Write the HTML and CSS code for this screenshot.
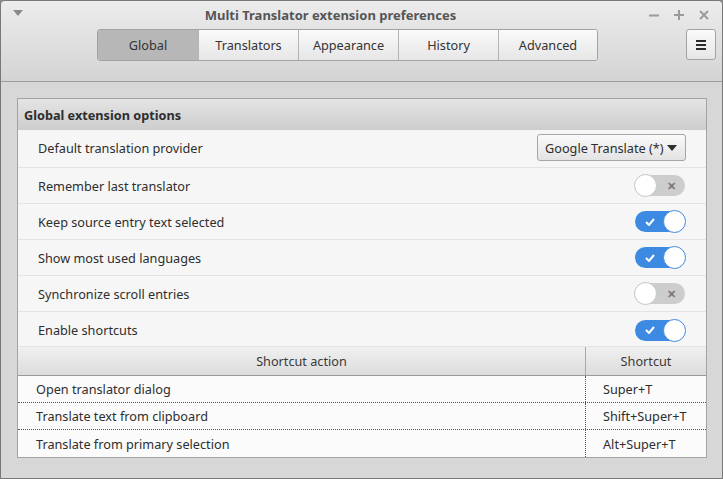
FILE: index.html
```html
<!DOCTYPE html>
<html>
<head>
<meta charset="utf-8">
<link rel="stylesheet" href="styles.css">
</head>
<body>
<div class="window">
  <header class="headerbar">
    <div class="titlerow">
      <svg class="wm-menu" width="10" height="6" viewBox="0 0 10 6"><path d="M0 0h10L5 6z" fill="#8a8a8a"/></svg>
      <div class="title">Multi Translator extension preferences</div>
      <div class="wm-buttons">
        <svg width="12" height="12" viewBox="0 0 12 12"><path d="M1 6.5h10" stroke="#9a9a9a" stroke-width="2"/></svg>
        <svg width="12" height="12" viewBox="0 0 12 12"><path d="M1 6h10M6 1v10" stroke="#9a9a9a" stroke-width="2"/></svg>
        <svg width="12" height="12" viewBox="0 0 12 12"><path d="M2 2l8 8M10 2l-8 8" stroke="#9a9a9a" stroke-width="2"/></svg>
      </div>
    </div>
    <div class="tabrow">
      <div class="tabs">
        <div class="tab active">Global</div>
        <div class="tab">Translators</div>
        <div class="tab">Appearance</div>
        <div class="tab">History</div>
        <div class="tab">Advanced</div>
      </div>
      <div class="menubtn">
        <svg width="12" height="12" viewBox="0 0 12 12"><path d="M1 2h10M1 6h10M1 10h10" stroke="#2a2a2a" stroke-width="2"/></svg>
      </div>
    </div>
  </header>
  <main class="content">
    <section class="frame">
      <div class="frame-head">Global extension options</div>
      <div class="row first">
        <span>Default translation provider</span>
        <div class="combo">Google Translate (*)<svg width="10" height="6" viewBox="0 0 10 6"><path d="M0 0h10L5 6z" fill="#2e2e2e"/></svg></div>
      </div>
      <div class="row">
        <span>Remember last translator</span>
        <div class="switch off"><span class="mark">✕</span><span class="knob"></span></div>
      </div>
      <div class="row">
        <span>Keep source entry text selected</span>
        <div class="switch on"><span class="knob"></span><svg class="check" width="10" height="8" viewBox="0 0 10 8"><path d="M1 4l3 3 5-6" stroke="#fff" stroke-width="2" fill="none"/></svg></div>
      </div>
      <div class="row">
        <span>Show most used languages</span>
        <div class="switch on"><span class="knob"></span><svg class="check" width="10" height="8" viewBox="0 0 10 8"><path d="M1 4l3 3 5-6" stroke="#fff" stroke-width="2" fill="none"/></svg></div>
      </div>
      <div class="row">
        <span>Synchronize scroll entries</span>
        <div class="switch off"><span class="mark">✕</span><span class="knob"></span></div>
      </div>
      <div class="row last">
        <span>Enable shortcuts</span>
        <div class="switch on"><span class="knob"></span><svg class="check" width="10" height="8" viewBox="0 0 10 8"><path d="M1 4l3 3 5-6" stroke="#fff" stroke-width="2" fill="none"/></svg></div>
      </div>
      <div class="tree">
        <div class="thead">
          <div class="c1">Shortcut action</div>
          <div class="c2">Shortcut</div>
        </div>
        <div class="trow"><div class="c1">Open translator dialog</div><div class="c2">Super+T</div></div>
        <div class="trow"><div class="c1">Translate text from clipboard</div><div class="c2">Shift+Super+T</div></div>
        <div class="trow"><div class="c1">Translate from primary selection</div><div class="c2">Alt+Super+T</div></div>
      </div>
    </section>
  </main>
</div>
</body>
</html>
```
FILE: styles.css
```css
* { box-sizing: border-box; }
html, body { margin: 0; padding: 0; }
body {
  width: 723px;
  height: 479px;
  font-family: "Noto Sans", "Open Sans", sans-serif;
  font-size: 12.7px;
  color: #2e2e2e;
  background: #8a8a8a;
  overflow: hidden;
}
.window {
  width: 723px;
  height: 479px;
  border: 1px solid #787878;
  border-radius: 5px 5px 0 0;
  background: #d6d6d6;
  display: flex;
  flex-direction: column;
  overflow: hidden;
}
.headerbar {
  height: 81px;
  flex: none;
  background: linear-gradient(#ececec, #d4d4d4);
  border-bottom: 1px solid #9c9c9c;
  display: flex;
  flex-direction: column;
}
.titlerow {
  height: 28px;
  display: flex;
  align-items: center;
  padding: 0 6px 0 12px;
}
.wm-menu { flex: none; margin-top: -4px; }
.title {
  flex: 1;
  text-align: center;
  font-weight: bold;
  font-size: 13px;
  color: #555;
  padding-right: 10px;
}
.wm-buttons {
  display: flex;
  gap: 13px;
  margin-right: 6px;
}
.tabrow {
  display: flex;
  align-items: center;
  height: 31px;
}
.tabs {
  display: flex;
  margin-left: 96px;
  border: 1px solid #a2a2a2;
  border-radius: 3px;
  overflow: hidden;
}
.tab {
  width: 100px;
  height: 30px;
  display: flex;
  align-items: center;
  justify-content: center;
  background: linear-gradient(#fafafa, #e6e6e6);
  border-left: 1px solid #b4b4b4;
  color: #333;
}
.tab:first-child { border-left: none; width: 100px; }
.tab:last-child { width: 99px; }
.tab.active { background: #b7b7b7; }
.menubtn {
  margin-left: auto;
  margin-right: 6px;
  width: 30px;
  height: 31px;
  border: 1px solid #a2a2a2;
  border-radius: 3px;
  background: linear-gradient(#fafafa, #e6e6e6);
  display: flex;
  align-items: center;
  justify-content: center;
}
.content {
  flex: 1;
  padding: 16px 15px 20px 16px;
  background: #d7d7d7;
}
.frame {
  border: 1px solid #a4a4a4;
  background: #f6f6f6;
  display: flex;
  flex-direction: column;
}
.frame-head {
  height: 31px;
  display: flex;
  align-items: center;
  padding-left: 6px;
  font-weight: bold;
  color: #2e2e2e;
  background: linear-gradient(#e4e4e4, #cdcdcd);
}
.row {
  height: 36px;
  display: flex;
  align-items: center;
  justify-content: space-between;
  padding: 0 21px 0 20px;
  border-bottom: 1px solid #e4e4e4;
}
.row.first { height: 38px; padding-bottom: 2px; }
.row.last { border-bottom: none; height: 34px; padding-top: 2px; }
.combo {
  height: 27px;
  width: 149px;
  display: flex;
  align-items: center;
  justify-content: space-between;
  padding: 0 8px 0 7px;
  border: 1px solid #a6a6a6;
  border-radius: 3px;
  background: linear-gradient(#fafafa, #e3e3e3);
  margin-right: -1px;
}
.switch {
  width: 50px;
  height: 21px;
  border-radius: 11px;
  position: relative;
  display: flex;
  align-items: center;
}
.switch.off { background: #cdcdcd; }
.switch.on { background: #3d8ae2; }
.knob {
  position: absolute;
  top: -1px;
  width: 23px;
  height: 23px;
  border-radius: 50%;
  background: #fff;
  border: 1px solid #c4c4c4;
}
.switch.off .knob { left: -1px; }
.switch.on .knob { right: -1px; border-color: #3d8ae2; }
.mark {
  position: absolute;
  right: 9px;
  font-size: 11px;
  font-weight: bold;
  color: #777;
  line-height: 1;
}
.check { position: absolute; left: 10px; }
.tree { border-top: 1px solid #e4e4e4; background: #fbfbfb; }
.thead {
  display: flex;
  height: 29px;
  background: linear-gradient(#f0f0f0, #dcdcdc);
  border-bottom: 1px solid #9a9a9a;
  color: #3a3a3a;
}
.thead .c1, .thead .c2 {
  display: flex;
  align-items: center;
  justify-content: center;
}
.thead .c2 { border-left: 1px solid #a8a8a8; }
.c1 { flex: 1; }
.c2 { width: 121px; }
.trow {
  display: flex;
  height: 27px;
  border-bottom: 1px dotted #555;
}
.trow:last-child { border-bottom: none; }
.trow .c1 { padding-left: 18px; display: flex; align-items: center; }
.trow .c2 { padding-left: 17px; display: flex; align-items: center; border-left: 1px dotted #555; }
```
